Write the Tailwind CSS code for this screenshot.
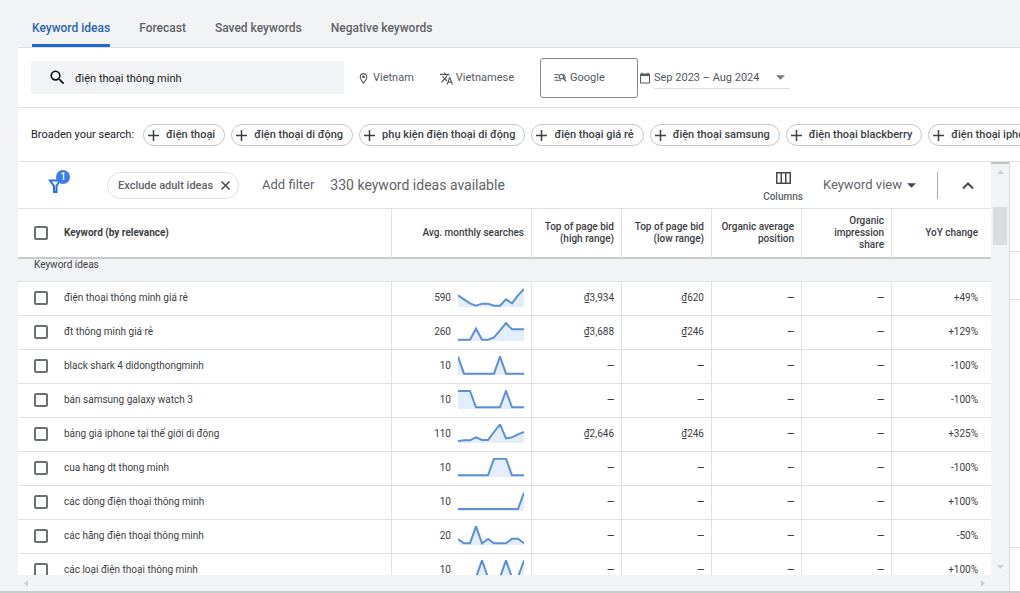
<!DOCTYPE html>
<html lang="en">
<head>
<meta charset="utf-8">
<meta name="viewport" content="width=device-width, initial-scale=1">
<title>Keyword ideas</title>
<script src="https://cdn.jsdelivr.net/npm/@tailwindcss/browser@4"></script>
</head>
<body class="flex h-screen flex-col overflow-hidden border-b-2 border-[#c9cbce] bg-[#f1f3f4] font-['Roboto','Noto_Sans',sans-serif] text-[11px] text-[#3c4043]">
  <nav class="ml-[18px] flex h-12 shrink-0 items-stretch gap-[29px] border-b border-[#dcdee0] pl-[14px] text-[12px] font-medium text-[#5f6368]">
    <a href="#ideas" aria-current="page" class="relative flex items-center pt-2 text-[#2f62b3]">Keyword ideas<span class="absolute inset-x-0 bottom-0 h-[3px] bg-[#1f66d0]"></span></a>
    <a href="#forecast" class="flex items-center pt-2">Forecast</a>
    <a href="#saved" class="flex items-center pt-2">Saved keywords</a>
    <a href="#negative" class="flex items-center pt-2">Negative keywords</a>
  </nav>

  <main class="ml-[18px] flex min-h-0 flex-1 flex-col">
    <section class="flex h-[60px] shrink-0 items-center border-b border-[#e0e2e4] bg-white pl-[13px] leading-[18px] text-[#55595e]">
      <label class="flex h-[33px] w-[313px] items-center gap-2 bg-[#f1f3f4] pl-[17px]">
        <svg class="size-[19px] shrink-0" viewBox="0 0 24 24" fill="#111"><path d="M15.5 14h-.79l-.28-.27A6.47 6.47 0 0 0 16 9.5 6.5 6.5 0 1 0 9.5 16c1.61 0 3.09-.59 4.23-1.57l.27.28v.79l5 4.99L20.49 19l-4.99-5zm-6 0C7.01 14 5 11.99 5 9.5S7.01 5 9.5 5 14 7.01 14 9.5 11.99 14 9.5 14z"/></svg>
        <input type="text" aria-label="Search keywords" value="điện thoại thông minh" class="h-full min-w-0 flex-1 bg-transparent pt-px text-[11px] text-[#202124] outline-none">
      </label>
      <button class="ml-[13px] flex items-center gap-[3px] pt-px">
        <svg class="size-[13px]" viewBox="0 0 24 24" fill="currentColor"><path d="M12 2C8.13 2 5 5.13 5 9c0 5.25 7 13 7 13s7-7.75 7-13c0-3.87-3.13-7-7-7zM7 9c0-2.76 2.24-5 5-5s5 2.24 5 5c0 2.88-2.88 7.19-5 9.88C9.92 16.21 7 11.85 7 9z"/><circle cx="12" cy="9" r="2.5"/></svg>
        Vietnam
      </button>
      <button class="ml-[26px] flex items-center gap-[3px] pt-px">
        <svg class="size-[13px]" viewBox="1 1 22 22" fill="currentColor"><path d="M12.87 15.07l-2.54-2.51.03-.03A17.52 17.52 0 0 0 14.07 6H17V4h-7V2H8v2H1v2h11.17C11.5 7.92 10.44 9.75 9 11.35 8.07 10.32 7.3 9.19 6.69 8h-2c.73 1.63 1.73 3.17 2.98 4.56l-5.09 5.02L4 19l5-5 3.11 3.11.76-2.04zM18.5 10h-2L12 22h2l1.12-3h4.75L21 22h2l-4.5-12zm-2.62 7l1.62-4.33L19.12 17h-3.24z"/></svg>
        Vietnamese
      </button>
      <button class="ml-[26px] flex h-10 w-[98px] items-center gap-[3px] rounded-[3px] border border-[#85888c] pt-px pl-[13px]">
        <svg class="h-3 w-[13px]" viewBox="0 0 24 22" fill="none" stroke="currentColor" stroke-width="2"><path d="M1 5h8M1 10h6M1 15h12"/><circle cx="13.500" cy="8.500" r="4"/><path d="M16.500 11.500l6 5.500M17 4.500c3 .5 4 4.500 3 9"/></svg>
        Google
      </button>
      <button class="ml-px flex items-center gap-[3px]">
        <svg class="size-3" viewBox="0 0 24 24" fill="currentColor"><path d="M20 3h-1V1h-2v2H7V1H5v2H4c-1.100 0-2 .9-2 2v16c0 1.100.9 2 2 2h16c1.100 0 2-.9 2-2V5c0-1.100-.9-2-2-2zm0 18H4V8h16v13z"/></svg>
        <span class="flex h-[22px] w-[136px] items-center justify-between border-b border-[#dcdee0] pt-px pr-[5px]">Sep 2023 – Aug 2024
          <svg class="h-[5px] w-[9px]" viewBox="0 0 10 5" fill="#777b80"><path d="M0 0h10L5 5z"/></svg>
        </span>
      </button>
    </section>

    <section id="broaden" class="flex h-[54px] shrink-0 items-center gap-[6px] overflow-hidden border-b border-[#e0e2e4] bg-white pl-[13px] leading-[18px]">
      <span class="mr-[3px] shrink-0 pt-px text-[#202124]">Broaden your search:</span>
    </section>

    <div class="flex min-h-0 flex-1">
      <div class="flex min-w-0 flex-1 flex-col">
        <header class="flex h-[47px] shrink-0 items-center border-b border-[#e0e2e4] bg-white pl-[30px] text-[13px] text-[#5f6368]">
          <button aria-label="Filters" class="relative size-[15px]">
            <svg class="size-[15px]" viewBox="0 0 15 15" fill="none" stroke="#2a6fdb" stroke-width="2"><path d="M2 2.500h10L8.500 8v6H6V8z"/></svg>
            <span class="absolute -top-2 left-2 flex size-[14px] items-center justify-center rounded-full bg-[#3a7de8] text-[10px] font-medium text-white">1</span>
          </button>
          <button class="ml-11 flex h-[27px] items-center gap-2 rounded-full border border-[#dcdee0] pt-px pr-2 pl-[10px] text-[11px] leading-[18px] font-medium">Exclude adult ideas
            <svg class="size-[9px]" viewBox="0 0 9 9" fill="none" stroke="#45494d" stroke-width="1.500"><path d="M.5.5l8 8M8.500.5l-8 8"/></svg>
          </button>
          <button class="ml-[23px]">Add filter</button>
          <h2 class="ml-4 text-[14px]">330 keyword ideas available</h2>
          <button class="ml-auto flex flex-col items-center gap-[5px] pt-[6px] text-[10px] leading-4 font-medium">
            <svg class="h-3 w-[15px]" viewBox="0 0 15 12" fill="none" stroke="#45494d" stroke-width="1.500"><path d="M.75.75h13.500v10.500H.75zM5.250 1v10M9.750 1v10"/></svg>
            Columns
          </button>
          <button class="ml-5 flex items-center gap-[5px]">Keyword view
            <svg class="h-[5px] w-[9px]" viewBox="0 0 10 5" fill="#45494d"><path d="M0 0h10L5 5z"/></svg>
          </button>
          <span class="ml-[21px] h-[27px] w-px bg-[#a9acb0]"></span>
          <button aria-label="Collapse" class="mr-[17px] ml-6">
            <svg class="h-[7px] w-3" viewBox="0 0 12 7" fill="none" stroke="#45494d" stroke-width="2"><path d="M1 6.500l5-5 5 5"/></svg>
          </button>
        </header>

        <div class="min-h-0 flex-1 overflow-hidden">
          <table class="w-full table-fixed border-separate border-spacing-0 text-right text-[10px] leading-4">
            <colgroup><col><col class="w-[140px]"><col class="w-[90px]"><col class="w-[90px]"><col class="w-[90px]"><col class="w-[90px]"><col class="w-[100px]"></colgroup>
            <thead class="bg-white leading-3 text-[#3c4043]">
              <tr class="h-[50px] *:border-b-2 *:border-b-[#c8cacd] *:p-0 *:font-medium">
                <th scope="col"><label class="flex items-center gap-4 pl-4 font-bold"><input type="checkbox" class="size-[14px] appearance-none rounded-[2px] border-2 border-[#6b6f74] bg-white">Keyword (by relevance)</label></th>
                <th scope="col" class="border-l border-[#e0e2e4]"><div class="pr-[7px]">Avg. monthly searches</div></th>
                <th scope="col" class="border-l border-[#e0e2e4]"><div class="pr-[7px]">Top of page bid<br>(high range)</div></th>
                <th scope="col" class="border-l border-[#e0e2e4]"><div class="pr-[7px]">Top of page bid<br>(low range)</div></th>
                <th scope="col" class="border-l border-[#e0e2e4]"><div class="pr-[7px]">Organic average<br>position</div></th>
                <th scope="col" class="border-l border-[#e0e2e4]"><div class="pr-[7px]">Organic<br>impression<br>share</div></th>
                <th scope="col" class="border-l border-[#e0e2e4]"><div class="pr-[13px]">YoY change</div></th>
              </tr>
            </thead>
            <tbody id="rows" class="text-[#3c4043]">
              <tr><th scope="rowgroup" colspan="7" class="h-[23px] border-b border-[#e0e2e4] p-0 pl-4 text-left align-top leading-3 font-normal">Keyword ideas</th></tr>
            </tbody>
          </table>
        </div>

        <div class="flex h-4 shrink-0 items-center justify-between px-[6px]">
          <svg class="h-[7px] w-1" viewBox="0 0 4 7" fill="#cfd1d4"><path d="M4 0v7L0 3.500z"/></svg>
          <svg class="h-[7px] w-1" viewBox="0 0 4 7" fill="#cfd1d4"><path d="M0 0v7l4-3.500z"/></svg>
        </div>
      </div>

      <div class="flex w-[18px] shrink-0 flex-col items-center justify-between border-t-2 border-[#bfc2c6] pb-[22px]">
        <div class="flex w-full flex-col items-center">
          <svg class="mt-[6px] h-1 w-[7px]" viewBox="0 0 7 4" fill="#cfd1d4"><path d="M0 4h7L3.500 0z"/></svg>
          <span class="mt-[33px] h-[38px] w-[14px] bg-[#dadce0]"></span>
        </div>
        <svg class="h-1 w-[7px]" viewBox="0 0 7 4" fill="#cfd1d4"><path d="M0 0h7L3.500 4z"/></svg>
      </div>
      <aside class="flex w-[11px] shrink-0 flex-col border-l border-[#dcdee0] bg-white">
        <div class="h-[90px] border-b border-[#dcdee0]"></div>
        <div class="h-12 border-b border-[#dcdee0]"></div>
        <div class="h-[248px] border-b border-[#dcdee0]"></div>
      </aside>
    </div>
  </main>

<script>
  const ideas = ['điện thoại', 'điện thoại di động', 'phụ kiện điện thoại di động', 'điện thoại giá rẻ', 'điện thoại samsung', 'điện thoại blackberry', 'điện thoại iphone'];
  document.getElementById('broaden').insertAdjacentHTML('beforeend', ideas.map(t => `
    <button class="flex h-[22px] shrink-0 items-center gap-[7px] rounded-full border border-[#c4c7ca] pt-px pr-[9px] pl-1 font-medium whitespace-nowrap text-[#3c4043]">
      <svg class="size-[11px]" viewBox="0 0 11 11" fill="none" stroke="#3c4043" stroke-width="1.500"><path d="M5.500 0v11M0 5.500h11"/></svg>${t}</button>`).join(''));

  // keyword, searches, high bid, low bid, change, 12 monthly trend values (0 = top, 57 = baseline)
  const rows = [
    ['điện thoại thông minh giá rẻ', '590', '₫3,934', '₫620', '+49%', [22,34,46,53,47,47,53,53,34,46,22,3]],
    ['đt thông minh giá rẻ', '260', '₫3,688', '₫246', '+129%', [53,53,53,20,53,53,46,25,3,22,22,22]],
    ['black shark 4 didongthongminh', '10', '–', '–', '-100%', [2,53,53,53,53,53,53,2,53,53,53,53]],
    ['bán samsung galaxy watch 3', '10', '–', '–', '-100%', [3,3,3,52,52,52,52,52,3,52,52,52]],
    ['bảng giá iphone tại thế giới di động', '110', '₫2,646', '₫246', '+325%', [51,49,49,40,48,48,24,1,43,40,31,24]],
    ['cua hang dt thong minh', '10', '–', '–', '-100%', [52,52,52,52,52,52,2,2,2,52,52,52]],
    ['các dòng điện thoại thông minh', '10', '–', '–', '+100%', [51,51,51,51,51,51,51,51,51,51,51,2]],
    ['các hãng điện thoại thông minh', '20', '–', '–', '-50%', [39,52,52,1,52,39,52,52,52,38,38,52]],
    ['các loại điện thoại thông minh', '10', '–', '–', '+100%', [52,52,52,52,1,52,52,52,1,52,52,1]],
  ];
  document.getElementById('rows').insertAdjacentHTML('beforeend', rows.map(([k, n, hi, lo, yoy, v]) => {
    const pts = v.map((y, i) => `${i * 18},${y}`).join(' ');
    const cell = t => t === '–'
      ? '<td class="border-b border-l border-[#e0e2e4] pr-[6px] text-[13px]">–</td>'
      : `<td class="border-b border-l border-[#e0e2e4] pr-[7px]">${t}</td>`;
    return `<tr class="h-[34px] bg-white *:pt-0 *:pb-px *:pl-0">
      <td class="border-b border-[#e0e2e4] pr-0"><label class="flex items-center gap-4 pl-4"><input type="checkbox" class="size-[14px] appearance-none rounded-[2px] border-2 border-[#6b6f74] bg-white">${k}</label></td>
      <td class="border-b border-l border-[#e0e2e4] pr-[7px]"><div class="flex items-center justify-end gap-[7px]">${n}<svg class="h-5 w-[66px]" viewBox="0 0 198 60" fill="none"><polygon points="0,57 ${pts} 198,57" fill="#e4eefb"/><polyline points="${pts}" stroke="#5b8fd9" stroke-width="6"/></svg></div></td>
      ${cell(hi)}${cell(lo)}${cell('–')}${cell('–')}
      <td class="border-b border-l border-[#e0e2e4] pr-[13px]">${yoy}</td></tr>`;
  }).join(''));
</script>
</body>
</html>
